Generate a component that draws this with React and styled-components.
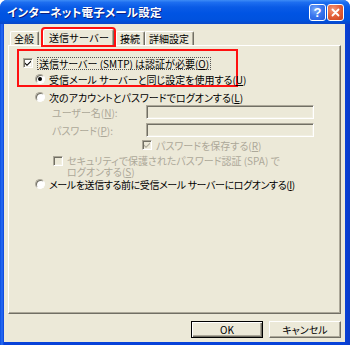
import React from 'react';
import styled, { createGlobalStyle } from 'styled-components';

const GlobalStyle = createGlobalStyle`
  html, body { margin: 0; padding: 0; background: #fff; }
  body {
    font-family: "Noto Sans CJK JP", "Noto Sans", sans-serif;
    font-feature-settings: "palt";
  }
`;

const Window = styled.div`
  width: 350px;
  height: 345px;
  box-sizing: border-box;
  display: flex;
  flex-direction: column;
  background: linear-gradient(to right, #0a4ee0 0px, #2a6ef5 2px, #0842d9 4px, #0842d9 344px, #0a3cc8 100%);
  border-radius: 7px 7px 0 0;
  overflow: hidden;
`;

const TitleBar = styled.div`
  height: 24px;
  flex-shrink: 0;
  display: flex;
  align-items: center;
  padding: 0 6px 0 7px;
  background: linear-gradient(to bottom, #3d8cf6 0%, #1d6ef0 10%, #0a5be6 30%, #0054e3 55%, #0052de 85%, #0a47c8 100%);
`;

const Title = styled.div`
  flex: 1;
  color: #fff;
  font-size: 11.5px;
  font-weight: 700;
  letter-spacing: 0.2px;
  text-shadow: 1px 1px 0 #0a1e80;
  margin-top: -1px;
`;

const CaptionButton = styled.div`
  width: 17px;
  height: 17px;
  box-sizing: border-box;
  margin-left: 1px;
  border: 1px solid #fff;
  border-radius: 3px;
  display: flex;
  align-items: center;
  justify-content: center;
  color: #fff;
  font-family: "Liberation Sans", sans-serif;
  font-weight: 700;
  font-size: 13px;
  background: ${p => p.close
    ? 'radial-gradient(circle at 35% 30%, #f29a7c 0%, #e5633d 45%, #c9401b 100%)'
    : 'radial-gradient(circle at 35% 30%, #7aaaf9 0%, #3b78ef 45%, #2157dc 100%)'};
`;

const Body = styled.div`
  flex: 1;
  margin: 0 5px 3px 4px;
  background: #ece9d8;
  display: flex;
  flex-direction: column;
  padding: 0 4px;
`;

const TabStrip = styled.div`
  height: 21px;
  display: flex;
  align-items: flex-end;
  padding-left: 2px;
`;

const Tab = styled.div`
  position: relative;
  z-index: ${p => (p.active ? 2 : 0)};
  height: ${p => (p.active ? 16 : 14)}px;
  box-sizing: border-box;
  padding: ${p => (p.active ? '0 4px 0 5px' : '0 4px 0 3px')};
  margin: ${p => (p.active ? '0 2px 0 4px' : '0')};
  display: flex;
  align-items: center;
  font-size: 10px;
  font-feature-settings: normal;
  color: #000;
  background: #ece9d8;
  border-top: 1px solid #fff;
  border-left: 1px solid #fff;
  border-right: 1px solid #716f64;
  box-shadow: inset -1px 0 0 #aca899;
  border-radius: 2px 2px 0 0;
  outline: ${p => (p.active ? '2px solid #ff1010' : 'none')};
  outline-offset: 0;
`;

const Panel = styled.div`
  height: 269px;
  box-sizing: border-box;
  border-top: 1px solid #fff;
  border-left: 1px solid #fff;
  border-right: 1px solid #716f64;
  border-bottom: 1px solid #716f64;
  box-shadow: inset -1px -1px 0 #aca899;
  background: #ece9d8;
  display: flex;
  flex-direction: column;
`;

const Highlight = styled.div`
  margin: 3px 0 0 8px;
  width: 221px;
  height: 38px;
  box-sizing: border-box;
  border: 2px solid #ff1010;
  padding-top: 6px;
  display: flex;
  flex-direction: column;
  gap: 4px;
`;

const Row = styled.div`
  display: flex;
  align-items: ${p => (p.top ? 'flex-start' : 'center')};
  height: ${p => p.h || 12}px;
  padding-left: ${p => p.indent || 0}px;
  margin-top: ${p => p.mt || 0}px;
  gap: ${p => p.gap || 4}px;
`;

const Text = styled.span`
  font-size: 10px;
  line-height: 11px;
  white-space: nowrap;
  letter-spacing: ${p => p.tight || 0}px;
  color: ${p => (p.disabled ? '#aca899' : '#000')};
  padding: ${p => (p.focus ? '0 1px' : '0')};
  border: ${p => (p.focus ? '1px dotted #555' : 'none')};
`;

const Key = styled.span`
  text-decoration: underline;
  text-underline-offset: 1px;
`;

const CheckBox = styled.span`
  flex-shrink: 0;
  width: 10px;
  height: 10px;
  box-sizing: border-box;
  border: 1px solid;
  border-color: #aca899 #fff #fff #aca899;
  box-shadow: inset 1px 1px 0 #716f64, inset -1px -1px 0 #f1efe2;
  background: ${p => (p.disabled ? '#ece9d8' : '#fff')};
  display: flex;
  align-items: center;
  justify-content: center;
  margin-top: ${p => p.mt || 0}px;
`;

const Radio = styled.span`
  flex-shrink: 0;
  width: 10px;
  height: 10px;
  box-sizing: border-box;
  border-radius: 50%;
  border: 1px solid;
  border-color: #aca899 #fff #fff #aca899;
  box-shadow: inset 1px 1px 0 #716f64;
  background: #fff;
  display: flex;
  align-items: center;
  justify-content: center;
  &::after {
    content: '';
    width: 4px;
    height: 4px;
    border-radius: 50%;
    background: ${p => (p.checked ? '#000' : 'transparent')};
  }
`;

const FieldLabel = styled.span`
  width: 90px;
  font-size: 10px;
  color: #aca899;
  white-space: nowrap;
`;

const Input = styled.div`
  width: 168px;
  height: 14px;
  box-sizing: border-box;
  border: 1px solid;
  border-color: #aca899 #fff #fff #aca899;
  box-shadow: inset 1px 1px 0 #716f64, inset -1px -1px 0 #f1efe2;
  background: #ece9d8;
`;

const Lines = styled.div`
  display: flex;
  flex-direction: column;
`;

const Footer = styled.div`
  flex: 1;
  display: flex;
  justify-content: flex-end;
  align-items: flex-start;
  padding-top: 7px;
  gap: 6px;
`;

const Button = styled.div`
  width: 72px;
  height: 17px;
  box-sizing: border-box;
  display: flex;
  align-items: center;
  justify-content: center;
  font-size: 10px;
  background: #ece9d8;
  border: 1px solid;
  border-color: ${p => (p.primary ? '#000' : '#fff #716f64 #716f64 #fff')};
  box-shadow: ${p => (p.primary
    ? 'inset 1px 1px 0 #fff, inset -1px -1px 0 #716f64, inset -2px -2px 0 #aca899'
    : 'inset -1px -1px 0 #aca899')};
`;

const Check = ({ color = '#000' }) => (
  <svg width="8" height="8" viewBox="0 0 8 8">
    <path d="M1 3.5 L3 5.5 L7 1.5 L7 3 L3 7 L1 5 Z" fill={color} />
  </svg>
);

const Close = () => (
  <svg width="9" height="9" viewBox="0 0 9 9">
    <path d="M1.5 1.5 L7.5 7.5 M7.5 1.5 L1.5 7.5" stroke="#fff" strokeWidth="1.8" strokeLinecap="round" />
  </svg>
);

export default function App() {
  return (
    <>
      <GlobalStyle />
      <Window>
        <TitleBar>
          <Title>インターネット電子メール設定</Title>
          <CaptionButton>?</CaptionButton>
          <CaptionButton close><Close /></CaptionButton>
        </TitleBar>
        <Body>
          <TabStrip>
            <Tab>全般</Tab>
            <Tab active>送信サーバー</Tab>
            <Tab>接続</Tab>
            <Tab>詳細設定</Tab>
          </TabStrip>
          <Panel>
            <Highlight>
              <Row indent={4} gap={4}>
                <CheckBox><Check /></CheckBox>
                <Text focus>送信サーバー (SMTP) は認証が必要(<Key>O</Key>)</Text>
              </Row>
              <Row indent={16}>
                <Radio checked />
                <Text>受信メール サーバーと同じ設定を使用する(<Key>U</Key>)</Text>
              </Row>
            </Highlight>
            <Row indent={26} mt={4}>
              <Radio />
              <Text>次のアカウントとパスワードでログオンする(<Key>L</Key>)</Text>
            </Row>
            <Row indent={43} mt={2} h={14} gap={0}>
              <FieldLabel>ユーザー名(<Key>N</Key>):</FieldLabel>
              <Input />
            </Row>
            <Row indent={43} mt={4} h={14} gap={0}>
              <FieldLabel>パスワード(<Key>P</Key>):</FieldLabel>
              <Input />
            </Row>
            <Row indent={133} mt={2}>
              <CheckBox disabled><Check color="#aca899" /></CheckBox>
              <Text disabled>パスワードを保存する(<Key>R</Key>)</Text>
            </Row>
            <Row indent={44} mt={4} h={22} top>
              <CheckBox disabled mt={1} />
              <Lines>
                <Text disabled>セキュリティで保護されたパスワード認証 (SPA) で</Text>
                <Text disabled>ログオンする(<Key>S</Key>)</Text>
              </Lines>
            </Row>
            <Row indent={26} mt={1}>
              <Radio />
              <Text tight={-0.4}>メールを送信する前に受信メール サーバーにログオンする(<Key>I</Key>)</Text>
            </Row>
          </Panel>
          <Footer>
            <Button primary>OK</Button>
            <Button>キャンセル</Button>
          </Footer>
        </Body>
      </Window>
    </>
  );
}
